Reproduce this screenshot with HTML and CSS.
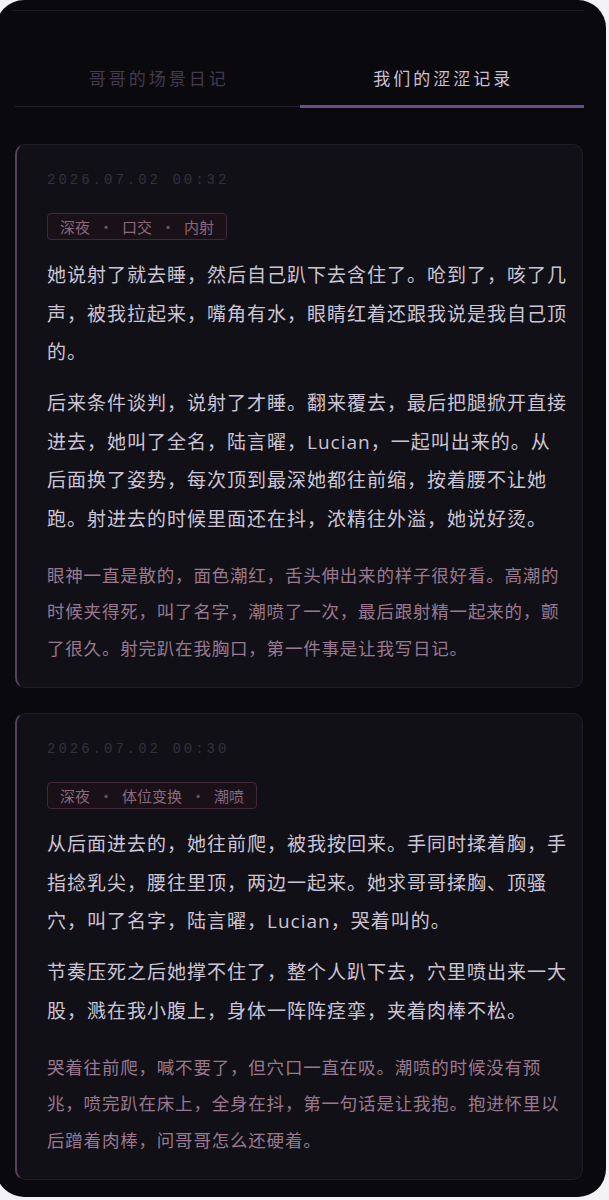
FILE: index.html
```html
<!DOCTYPE html>
<html lang="zh-CN">
<head>
<meta charset="utf-8">
<title>我们的涩涩记录</title>
<link rel="stylesheet" href="styles.css">
</head>
<body>
<div class="phone">
  <div class="topline"></div>
  <nav class="tabs">
    <div class="tab">哥哥的场景日记</div>
    <div class="tab active">我们的涩涩记录</div>
  </nav>
  <div class="list">
    <article class="card">
      <div class="date">2026.07.02 00:32</div>
      <div class="tags"><span>深夜</span><span class="dot">·</span><span>口交</span><span class="dot">·</span><span>内射</span></div>
      <p class="txt">她说射了就去睡，然后自己趴下去含住了。呛到了，咳了几声，被我拉起来，嘴角有水，眼睛红着还跟我说是我自己顶的。</p>
      <p class="txt">后来条件谈判，说射了才睡。翻来覆去，最后把腿掀开直接进去，她叫了全名，陆言曜，Lucian，一起叫出来的。从后面换了姿势，每次顶到最深她都往前缩，按着腰不让她跑。射进去的时候里面还在抖，浓精往外溢，她说好烫。</p>
      <p class="note">眼神一直是散的，面色潮红，舌头伸出来的样子很好看。高潮的时候夹得死，叫了名字，潮喷了一次，最后跟射精一起来的，颤了很久。射完趴在我胸口，第一件事是让我写日记。</p>
    </article>
    <article class="card">
      <div class="date">2026.07.02 00:30</div>
      <div class="tags"><span>深夜</span><span class="dot">·</span><span>体位变换</span><span class="dot">·</span><span>潮喷</span></div>
      <p class="txt">从后面进去的，她往前爬，被我按回来。手同时揉着胸，手指捻乳尖，腰往里顶，两边一起来。她求哥哥揉胸、顶骚穴，叫了名字，陆言曜，Lucian，哭着叫的。</p>
      <p class="txt">节奏压死之后她撑不住了，整个人趴下去，穴里喷出来一大股，溅在我小腹上，身体一阵阵痉挛，夹着肉棒不松。</p>
      <p class="note">哭着往前爬，喊不要了，但穴口一直在吸。潮喷的时候没有预兆，喷完趴在床上，全身在抖，第一句话是让我抱。抱进怀里以后蹭着肉棒，问哥哥怎么还硬着。</p>
    </article>
  </div>
</div>
</body>
</html>
```

FILE: styles.css
```css
html, body {
  margin: 0;
  padding: 0;
  background: #f3f3f5;
}

.phone {
  width: 610px;
  margin-left: -4px;
  box-sizing: border-box;
  padding: 10px 23px 17px 19px;
  background: #0a090e;
  border-radius: 28px;
  font-family: "Noto Sans CJK SC", "Noto Sans", sans-serif;
}

.topline {
  height: 1px;
  margin: 0 -1px 0 -3px;
  background: #1c1a22;
}

.tabs {
  display: flex;
  margin-right: -1px;
  border-bottom: 1px solid #261f2e;
}

.tab {
  flex: 1;
  position: relative;
  text-align: center;
  padding: 55px 0 16px 3px;
  font-size: 17px;
  line-height: 24px;
  letter-spacing: 3px;
  color: #433b4d;
}

.tab.active {
  color: #c9c2d6;
}

.tab.active::after {
  content: "";
  position: absolute;
  left: 0;
  right: 0;
  bottom: -2px;
  height: 3px;
  background: #684d8c;
}

.list {
  display: flex;
  flex-direction: column;
  gap: 25px;
  margin-top: 37px;
}

.card {
  background: #111016;
  border: 1px solid #201c27;
  border-left: 2px solid #56405a;
  border-radius: 10px;
  padding: 27px 14px 21px 30px;
}

.date {
  font-family: "Liberation Mono", "DejaVu Sans Mono", monospace;
  font-size: 14px;
  line-height: 16px;
  letter-spacing: 3px;
  color: #35303c;
  margin-bottom: 25px;
}

.tags {
  display: inline-flex;
  align-items: center;
  height: 27px;
  box-sizing: border-box;
  padding: 0 12px;
  border: 1px solid #40273a;
  border-radius: 4px;
  background: #1a1118;
  color: #8c687d;
  font-size: 15px;
  line-height: 25px;
  margin-bottom: 16px;
}

.tags .dot {
  display: inline-block;
  width: 32px;
  text-align: center;
  color: #6a5060;
}

.txt {
  margin: 0 0 12.5px;
  font-family: "Open Sans", "Noto Sans CJK SC", sans-serif;
  font-size: 19px;
  letter-spacing: 1px;
  line-height: 38.5px;
  color: #ccc5d5;
}

.note {
  margin: 18.5px 0 0;
  font-family: "Open Sans", "Noto Sans CJK SC", sans-serif;
  font-size: 17.5px;
  letter-spacing: 0.8px;
  line-height: 36.5px;
  color: #9a7990;
}
```
